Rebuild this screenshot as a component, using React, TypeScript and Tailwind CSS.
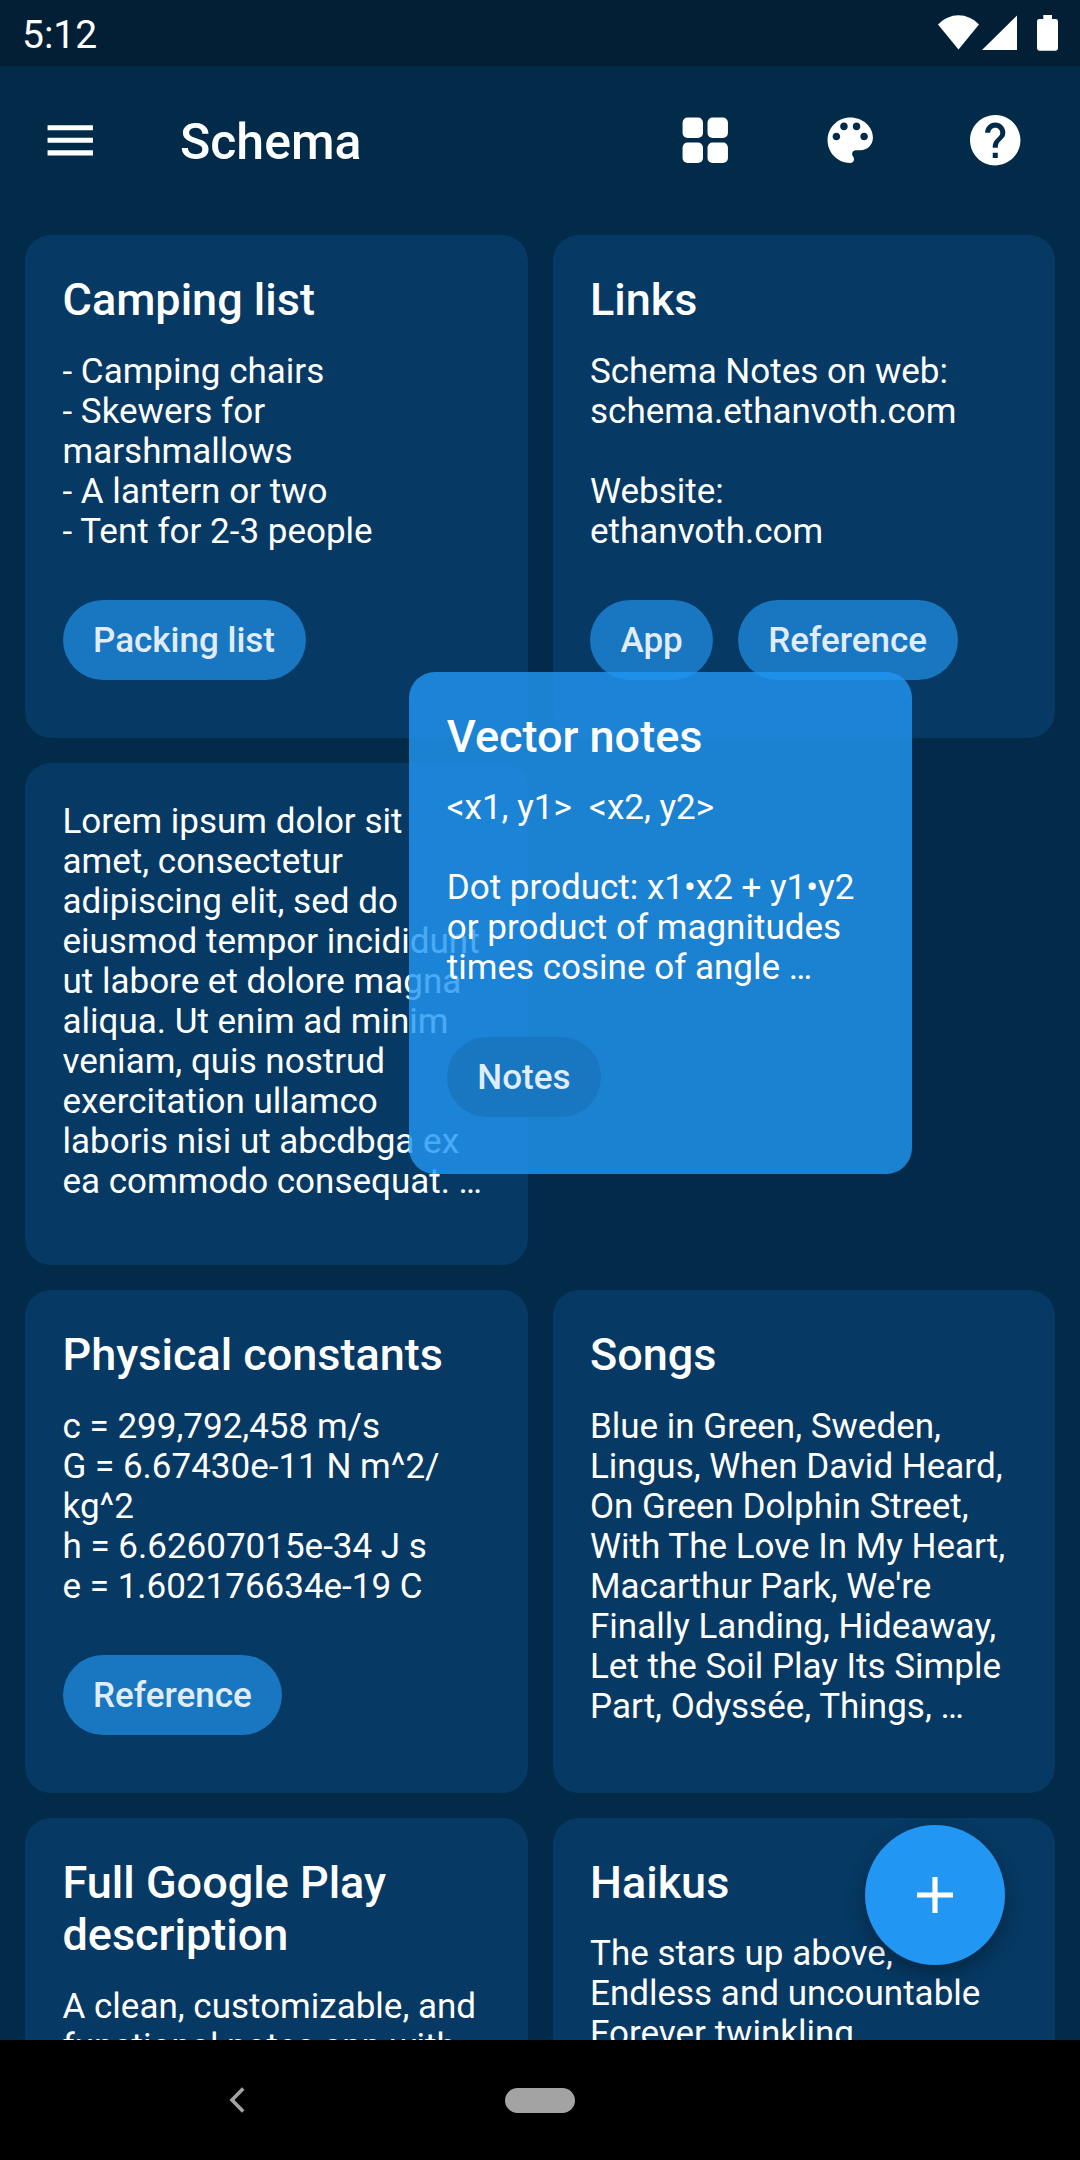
import type { ReactNode } from "react";

type Note = { title?: string; lines: string[]; tags?: string[] };

const notes: (Note | null)[] = [
  {
    title: "Camping list",
    lines: ["- Camping chairs", "- Skewers for", "marshmallows", "- A lantern or two", "- Tent for 2-3 people"],
    tags: ["Packing list"],
  },
  {
    title: "Links",
    lines: ["Schema Notes on web:", "schema.ethanvoth.com", "", "Website:", "ethanvoth.com"],
    tags: ["App", "Reference"],
  },
  {
    lines: [
      "Lorem ipsum dolor sit",
      "amet, consectetur",
      "adipiscing elit, sed do",
      "eiusmod tempor incididunt",
      "ut labore et dolore magna",
      "aliqua. Ut enim ad minim",
      "veniam, quis nostrud",
      "exercitation ullamco",
      "laboris nisi ut abcdbga ex",
      "ea commodo consequat. …",
    ],
  },
  null,
  {
    title: "Physical constants",
    lines: ["c = 299,792,458 m/s", "G = 6.67430e-11 N m^2/", "kg^2", "h = 6.62607015e-34 J s", "e = 1.602176634e-19 C"],
    tags: ["Reference"],
  },
  {
    title: "Songs",
    lines: [
      "Blue in Green, Sweden,",
      "Lingus, When David Heard,",
      "On Green Dolphin Street,",
      "With The Love In My Heart,",
      "Macarthur Park, We're",
      "Finally Landing, Hideaway,",
      "Let the Soil Play Its Simple",
      "Part, Odyssée, Things, …",
    ],
  },
  {
    title: "Full Google Play\ndescription",
    lines: ["A clean, customizable, and", "functional notes app with"],
  },
  {
    title: "Haikus",
    lines: ["The stars up above,", "Endless and uncountable", "Forever twinkling"],
  },
];

const draggedNote: Note = {
  title: "Vector notes",
  lines: ["<x1, y1>  <x2, y2>", "", "Dot product: x1•x2 + y1•y2", "or product of magnitudes", "times cosine of angle …"],
  tags: ["Notes"],
};

function NoteContent({ note }: { note: Note }) {
  return (
    <div className="flex flex-col items-start whitespace-pre px-[37.5px] pt-[39px]">
      {note.title && (
        <h2 className="mb-[25.5px] text-[45px] leading-[52.3px] font-medium">{note.title}</h2>
      )}
      <p className="text-[35px] leading-10">{note.lines.join("\n")}</p>
      {note.tags && (
        <div className="mt-[48.5px] flex gap-[24.5px]">
          {note.tags.map((tag) => (
            <span
              key={tag}
              className="flex h-20 items-center rounded-full bg-[#1976c1] px-[30.5px] pt-[2px] text-[35px] font-medium text-[#e0edf8]"
            >
              {tag}
            </span>
          ))}
        </div>
      )}
    </div>
  );
}

function Icon({ children }: { children: ReactNode }) {
  return (
    <svg viewBox="0 0 24 24" fill="currentColor" className="size-[60.5px]">
      {children}
    </svg>
  );
}

function StatusBar() {
  return (
    <div className="flex h-[66px] shrink-0 items-center justify-between bg-[#021f36] pl-[22px]">
      <span className="pt-[5px] text-[39px] leading-none">5:12</span>
      <svg width="142" height="66" viewBox="938 0 142 66" fill="currentColor">
        <path d="M958.5 49.5 938 24.5C943.8 18.7 950.8 15.3 958.5 15.3S973.2 18.7 979 24.5Z" />
        <path d="M982 50 1017 15.5V50Z" />
        <path d="M1043.3 15h8.7v4h3.6a2.4 2.4 0 0 1 2.4 2.4v26.9a2.4 2.4 0 0 1-2.4 2.4h-16.2a2.4 2.4 0 0 1-2.4-2.4V21.4a2.4 2.4 0 0 1 2.4-2.4h3.9Z" />
      </svg>
    </div>
  );
}

function Header() {
  return (
    <header className="flex h-[169px] shrink-0 items-center justify-between pr-[54.75px] pb-[21px] pl-[39.5px]">
      <div className="flex items-center gap-[80px]">
        <button aria-label="Menu">
          <Icon>
            <path d="M3 18h18v-2H3v2zm0-5h18v-2H3v2zm0-7v2h18V6H3z" />
          </Icon>
        </button>
        <h1 className="pt-[3px] text-[50px] leading-[60px] font-medium">Schema</h1>
      </div>
      <div className="flex items-center gap-[84.5px]">
        <button aria-label="Grid view">
          <Icon>
            <rect x="3" y="3" width="8.1" height="8.1" rx="2" />
            <rect x="12.9" y="3" width="8.1" height="8.1" rx="2" />
            <rect x="3" y="12.9" width="8.1" height="8.1" rx="2" />
            <rect x="12.9" y="12.9" width="8.1" height="8.1" rx="2" />
          </Icon>
        </button>
        <button aria-label="Theme">
          <Icon>
            <path d="M12 3c-4.97 0-9 4.03-9 9s4.03 9 9 9c.83 0 1.5-.67 1.5-1.5 0-.39-.15-.74-.39-1.01-.23-.26-.38-.61-.38-.99 0-.83.67-1.5 1.5-1.5H16c2.76 0 5-2.24 5-5 0-4.42-4.03-8-9-8zm-5.5 9c-.83 0-1.5-.67-1.5-1.5S5.67 9 6.5 9 8 9.67 8 10.5 7.33 12 6.5 12zm3-4C8.67 8 8 7.33 8 6.5S8.67 5 9.5 5s1.5.67 1.5 1.5S10.33 8 9.5 8zm5 0c-.83 0-1.5-.67-1.5-1.5S13.67 5 14.5 5s1.5.67 1.5 1.5S15.33 8 14.5 8zm3 4c-.83 0-1.5-.67-1.5-1.5S16.67 9 17.5 9s1.5.67 1.5 1.5-.67 1.5-1.5 1.5z" />
          </Icon>
        </button>
        <button aria-label="Help">
          <Icon>
            <path d="M12 2C6.48 2 2 6.48 2 12s4.48 10 10 10 10-4.48 10-10S17.52 2 12 2zm1 17h-2v-2h2v2zm2.07-7.75-.9.92C13.45 12.9 13 13.5 13 15h-2v-.5c0-1.1.45-2.1 1.17-2.83l1.24-1.26c.37-.36.59-.86.59-1.41 0-1.1-.9-2-2-2s-2 .9-2 2H8c0-2.21 1.79-4 4-4s4 1.79 4 4c0 .88-.36 1.68-.93 2.25z" />
          </Icon>
        </button>
      </div>
    </header>
  );
}

function NavigationBar() {
  return (
    <nav className="grid h-[120px] shrink-0 grid-cols-[475px_130px] items-center bg-black text-[#a3a3a3]">
      <button aria-label="Back" className="justify-self-end pr-[228px]">
        <svg width="19" height="30" viewBox="0 0 19 30" fill="none" stroke="currentColor" strokeWidth="3.6">
          <path d="M15.2 3.5 4 15 15.2 26.5" />
        </svg>
      </button>
      <button aria-label="Home" className="h-[25px] w-[70px] justify-self-center rounded-full bg-[#a3a3a3]" />
    </nav>
  );
}

export default function App() {
  return (
    <div className="relative flex h-[2160px] w-[1080px] flex-col overflow-hidden bg-[#022a49] font-['Roboto',sans-serif] text-white">
      <StatusBar />
      <Header />
      <main className="grid min-h-0 flex-1 auto-rows-[502.5px] grid-cols-2 gap-[25px] overflow-hidden px-[25px]">
        {notes.map((note, i) =>
          note ? (
            <article key={i} className="rounded-[26px] bg-[#063963]">
              <NoteContent note={note} />
            </article>
          ) : (
            <div key={i} />
          ),
        )}
      </main>
      <NavigationBar />

      <article className="absolute top-[671.5px] left-[409.3px] size-[502.5px] rounded-[26px] bg-[#2196f3]/81">
        <NoteContent note={draggedNote} />
      </article>
      <button
        aria-label="Add note"
        className="absolute top-[1825px] left-[865px] flex size-[140px] items-center justify-center rounded-full bg-[#2196f3] shadow-[0_9px_20px_rgba(0,0,0,0.3)]"
      >
        <svg width="36" height="36" viewBox="0 0 36 36" fill="currentColor">
          <path d="M15.4 0h5.2v15.4H36v5.2H20.6V36h-5.2V20.6H0v-5.2h15.4Z" />
        </svg>
      </button>
    </div>
  );
}
